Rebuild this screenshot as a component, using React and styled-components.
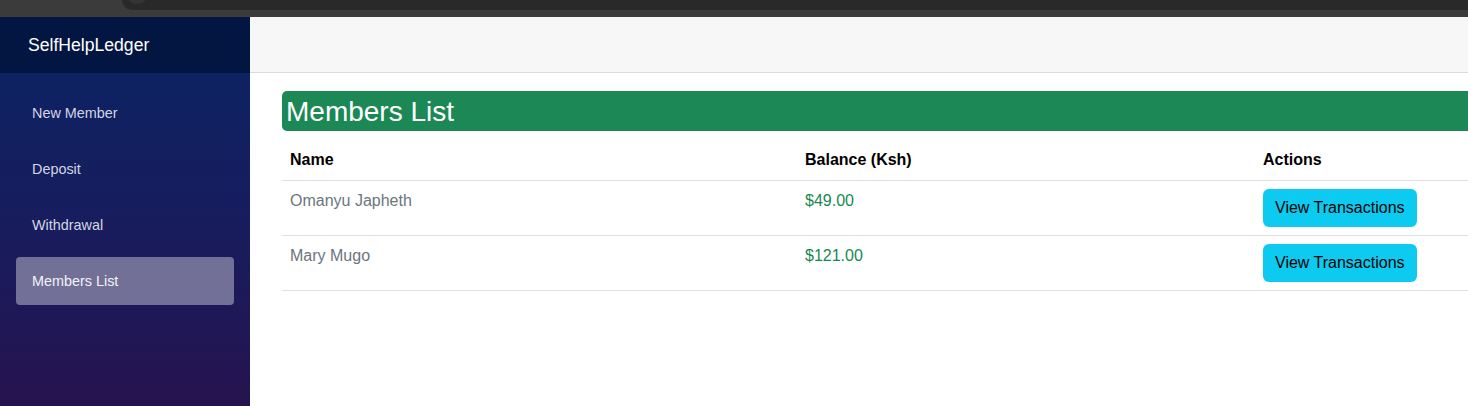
import React from "react";
import styled, { createGlobalStyle } from "styled-components";

const members = [
  { id: 1, name: "Omanyu Japheth", balance: 49 },
  { id: 2, name: "Mary Mugo", balance: 121 },
];

const navItems = ["New Member", "Deposit", "Withdrawal", "Members List"];

const App = () => {
  return (
    <>
      <GlobalStyle />
      <Page>
        <BrowserBar>
          <AddressBar />
        </BrowserBar>
        <Layout>
          <Sidebar>
            <Brand>SelfHelpLedger</Brand>
            <Nav>
              {navItems.map((item) => (
                <NavItem key={item} $active={item === "Members List"}>
                  {item}
                </NavItem>
              ))}
            </Nav>
          </Sidebar>
          <Main>
            <TopBar />
            <Content>
              <Title>Members List</Title>
              <Table>
                <colgroup>
                  <col style={{ width: 515 }} />
                  <col style={{ width: 458 }} />
                  <col />
                </colgroup>
                <thead>
                  <tr>
                    <Th>Name</Th>
                    <Th>Balance (Ksh)</Th>
                    <Th>Actions</Th>
                  </tr>
                </thead>
                <tbody>
                  {members.map((m) => (
                    <tr key={m.id}>
                      <NameCell>{m.name}</NameCell>
                      <BalanceCell>${m.balance.toFixed(2)}</BalanceCell>
                      <Td>
                        <ViewButton>View Transactions</ViewButton>
                      </Td>
                    </tr>
                  ))}
                </tbody>
              </Table>
            </Content>
          </Main>
        </Layout>
      </Page>
    </>
  );
};

export default App;

const GlobalStyle = createGlobalStyle`
  * {
    box-sizing: border-box;
  }
  body {
    margin: 0;
    font-family: "Liberation Sans", Arial, sans-serif;
    background: #fff;
    overflow: hidden;
  }
`;

const Page = styled.div`
  width: 1468px;
  height: 406px;
  display: flex;
  flex-direction: column;
  overflow: hidden;
`;

const BrowserBar = styled.div`
  height: 17px;
  flex-shrink: 0;
  background: #3b3b3b;
  padding-left: 122px;
`;

const AddressBar = styled.div`
  position: relative;
  height: 10px;
  background: #292929;
  border-bottom-left-radius: 10px;

  &::before {
    content: "";
    position: absolute;
    left: 5px;
    top: -12px;
    width: 20px;
    height: 16px;
    border-radius: 50%;
    background: #343434;
  }
`;

const Layout = styled.div`
  flex: 1;
  display: flex;
  min-height: 0;
`;

const Sidebar = styled.aside`
  width: 250px;
  flex-shrink: 0;
  display: flex;
  flex-direction: column;
  background: linear-gradient(180deg, #0a2463 0%, #171d5e 50%, #25134f 100%);
`;

const Brand = styled.div`
  height: 56px;
  padding: 0 28px;
  display: flex;
  align-items: center;
  background: #021641;
  color: #ffffff;
  font-size: 17.6px;
`;

const Nav = styled.nav`
  display: flex;
  flex-direction: column;
  gap: 8px;
  padding: 16px;
`;

const NavItem = styled.div`
  height: 48px;
  padding: 0 16px;
  display: flex;
  align-items: center;
  font-size: 14.4px;
  color: ${(p) => (p.$active ? "#f2f2f6" : "#d3d6e4")};
  background: ${(p) => (p.$active ? "#727096" : "transparent")};
  border-radius: 4px;
`;

const Main = styled.main`
  flex: 1;
  min-width: 0;
  display: flex;
  flex-direction: column;
  overflow: hidden;
`;

const TopBar = styled.div`
  height: 56px;
  flex-shrink: 0;
  background: #f7f7f7;
  border-bottom: 1px solid #dadada;
`;

const Content = styled.div`
  width: 1260px;
  padding: 18px 0 0 32px;
`;

const Title = styled.h2`
  margin: 0;
  height: 40px;
  padding: 0 4px;
  background: #1b8856;
  border-radius: 5px;
  color: #ffffff;
  font-size: 28px;
  font-weight: 400;
  line-height: 42px;
`;

const Table = styled.table`
  width: 100%;
  margin-top: 9px;
  border-collapse: collapse;
  table-layout: fixed;
`;

const Th = styled.th`
  padding: 8px;
  text-align: left;
  font-size: 16px;
  font-weight: 700;
  line-height: 24px;
  color: #000;
  border-bottom: 1px solid #dee2e6;
`;

const Td = styled.td`
  padding: 8px;
  vertical-align: top;
  font-size: 16px;
  line-height: 24px;
  border-bottom: 1px solid #dee2e6;
`;

const NameCell = styled(Td)`
  color: #6c757d;
`;

const BalanceCell = styled(Td)`
  color: #198754;
`;

const ViewButton = styled.button`
  height: 38px;
  padding: 0 12px;
  border: none;
  border-radius: 6px;
  background: #0dcaf0;
  color: #000;
  font-family: inherit;
  font-size: 16px;
  line-height: 24px;
  cursor: pointer;
`;
